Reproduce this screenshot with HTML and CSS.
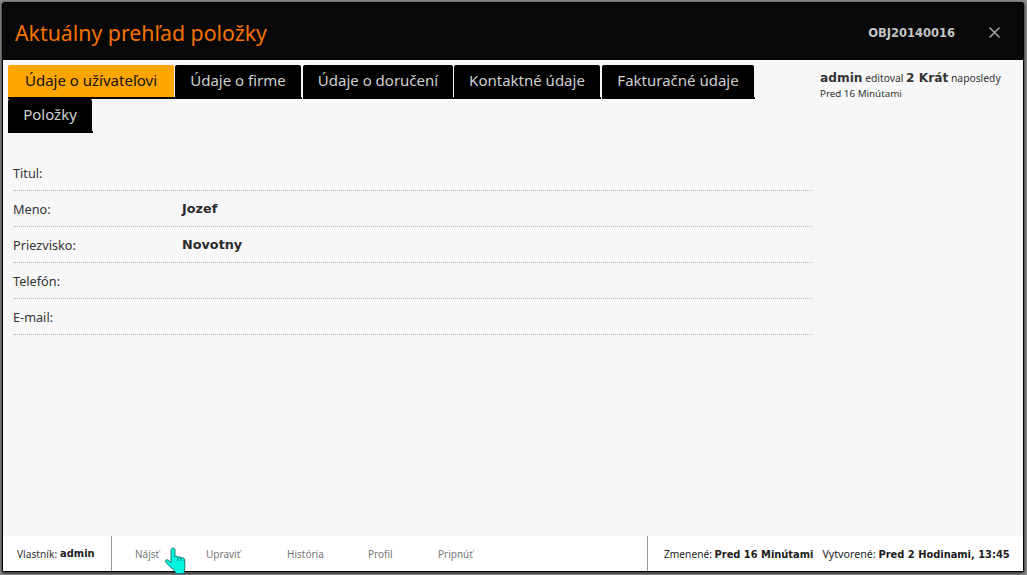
FILE: index.html
```html
<!DOCTYPE html>
<html lang="sk">
<head>
<meta charset="utf-8">
<title>Aktuálny prehľad položky</title>
<link rel="stylesheet" href="styles.css">
</head>
<body>
<div class="modal">
  <header class="head">
    <h1 class="title">Aktuálny prehľad položky</h1>
    <span class="code">OBJ20140016</span>
    <svg class="close" width="11" height="11" viewBox="0 0 11 11"><path d="M.5.5l10 10M10.500.5l-10 10" stroke="#a8a8a8" stroke-width="1.500" fill="none"/></svg>
  </header>
  <main class="body">
    <div class="left">
      <nav class="tabs">
        <a class="tab active t1">Údaje o užívateľovi</a>
        <a class="tab t2">Údaje o firme</a>
        <a class="tab t3">Údaje o doručení</a>
        <a class="tab t4">Kontaktné údaje</a>
        <a class="tab t5">Fakturačné údaje</a>
        <a class="tab t6">Položky</a>
      </nav>
      <section class="rows">
        <div class="row"><span class="label">Titul:</span><b class="value"></b></div>
        <div class="row"><span class="label">Meno:</span><b class="value">Jozef</b></div>
        <div class="row"><span class="label">Priezvisko:</span><b class="value">Novotny</b></div>
        <div class="row"><span class="label">Telefón:</span><b class="value"></b></div>
        <div class="row"><span class="label">E-mail:</span><b class="value"></b></div>
      </section>
    </div>
    <aside class="side">
      <p class="edit"><b>admin</b> editoval <b>2 Krát</b> naposledy</p>
      <p class="when">Pred 16 Minútami</p>
    </aside>
  </main>
  <footer class="foot">
    <div class="owner">Vlastník: <b>admin</b></div>
    <div class="actions">
      <a class="act a1">Nájsť</a>
      <a class="act a2">Upraviť</a>
      <a class="act a3">História</a>
      <a class="act a4">Profil</a>
      <a class="act a5">Pripnúť</a>
    </div>
    <div class="dates"><span>Zmenené: <b>Pred 16 Minútami</b></span><span class="created">Vytvorené: <b>Pred 2 Hodinami, 13:45</b></span></div>
  </footer>
  <svg class="cursor" width="22" height="28" viewBox="0 0 22 28"><path d="M6 3c0-2.500 4-2.500 4 0v7c1-1.500 3-1 3 .5c1-1.200 3-.8 3 .7c1-1 3.500-.5 3.500 1.500l.5 6-1 8H11l-2-4C6 21 3 18 .8 15c-1-1.500.5-3 2-2L6 15.500z" fill="#00f5e0" stroke="#0b5a55" stroke-width=".8"/><path d="M13 10.500v3.500M16 11.200v3M19.200 12.500v2" stroke="#0b5a55" stroke-width=".8" fill="none"/></svg>
</div>
</body>
</html>
```
FILE: styles.css
```css
* { box-sizing: border-box; }
html, body { margin: 0; height: 100%; }
body {
  background: #8a8a8a;
  padding: 3px 4px 0 3px;
  font-family: "DejaVu Sans", sans-serif;
  overflow: hidden;
}
.modal {
  position: relative;
  height: 568px;
  display: flex;
  flex-direction: column;
  background: #f7f7f7;
  box-shadow: 0 0 0 1px #000, 0 1px 2px 2px #444;
  border-radius: 2px;
}
.head {
  height: 57px;
  flex: none;
  background: #080808;
  display: flex;
  align-items: center;
  padding: 2px 23px 0 12px;
}
.title {
  margin: 0;
  flex: 1;
  font: normal 21.300px "Noto Sans", sans-serif;
  color: #f57200;
}
.code {
  font: bold 11.500px "DejaVu Sans", sans-serif;
  color: #c4c4c4;
  margin-right: 34px;
}
.body {
  flex: 1;
  display: flex;
  min-height: 0;
}
.left { width: 809px; flex: none; padding: 5px 0 0 5px; }
.tabs {
  display: flex;
  flex-wrap: wrap;
  width: 760px;
}
.tab {
  position: relative;
  height: 32px;
  margin: 0 1px 2px 0;
  background: #000;
  color: #d0d0d0;
  font: 15px/31px "Noto Sans", sans-serif;
  text-align: center;
  border-radius: 2px 2px 0 0;
}
.tab::after {
  content: "";
  position: absolute;
  left: 0;
  right: -1px;
  bottom: -2px;
  height: 2px;
  background: #000;
}
.t1 { width: 166px; }
.t2 { width: 126px; margin-right: 2px; }
.t3 { width: 150px; }
.t4 { width: 146px; margin-right: 2px; }
.t5 { width: 152px; }
.t6 { width: 84px; }
.tab.active { background: #ffa500; color: #111; }
.rows { margin-top: 22px; padding-left: 6px; }
.row {
  height: 36px;
  display: flex;
  align-items: center;
  border-bottom: 1px dotted #b4b4b4;
  color: #333;
}
.label { width: 169px; margin-left: -1px; font: 12.700px "Noto Sans", sans-serif; }
.value { font: bold 12.800px "DejaVu Sans", sans-serif; color: #2b2b2b; }
.side { padding: 11px 0 0 8px; color: #333; }
.edit { margin: 0; font: 10.300px/15px "Noto Sans", sans-serif; white-space: nowrap; }
.edit b { font: bold 12.200px "DejaVu Sans", sans-serif; }
.when { margin: 0; font: 9.800px/15px "Noto Sans", sans-serif; }
.foot {
  height: 35px;
  flex: none;
  background: #fff;
  display: flex;
  align-items: center;
  font: 10.200px "Noto Sans", sans-serif;
  color: #333;
}
.foot b { font: bold 9.900px "DejaVu Sans", sans-serif; color: #1c1c1c; }
.owner { width: 109px; height: 100%; padding-left: 14px; display: flex; align-items: center; gap: 3px; border-right: 1px solid #999; white-space: nowrap; }
.actions { width: 536px; height: 100%; display: flex; align-items: center; padding-left: 23px; border-right: 1px solid #999; color: #777; font-size: 10px; }
.act { width: 71px; flex: none; }
.a4 { width: 70px; }
.a3 { width: 81px; }
.a1 { width: 71px; }
.a2 { width: 81px; }
.dates { display: flex; gap: 9px; padding-left: 16px; white-space: nowrap; color: #222; }
.created { font-size: 10.700px; }
.cursor { position: absolute; left: 162px; top: 544px; }
```
